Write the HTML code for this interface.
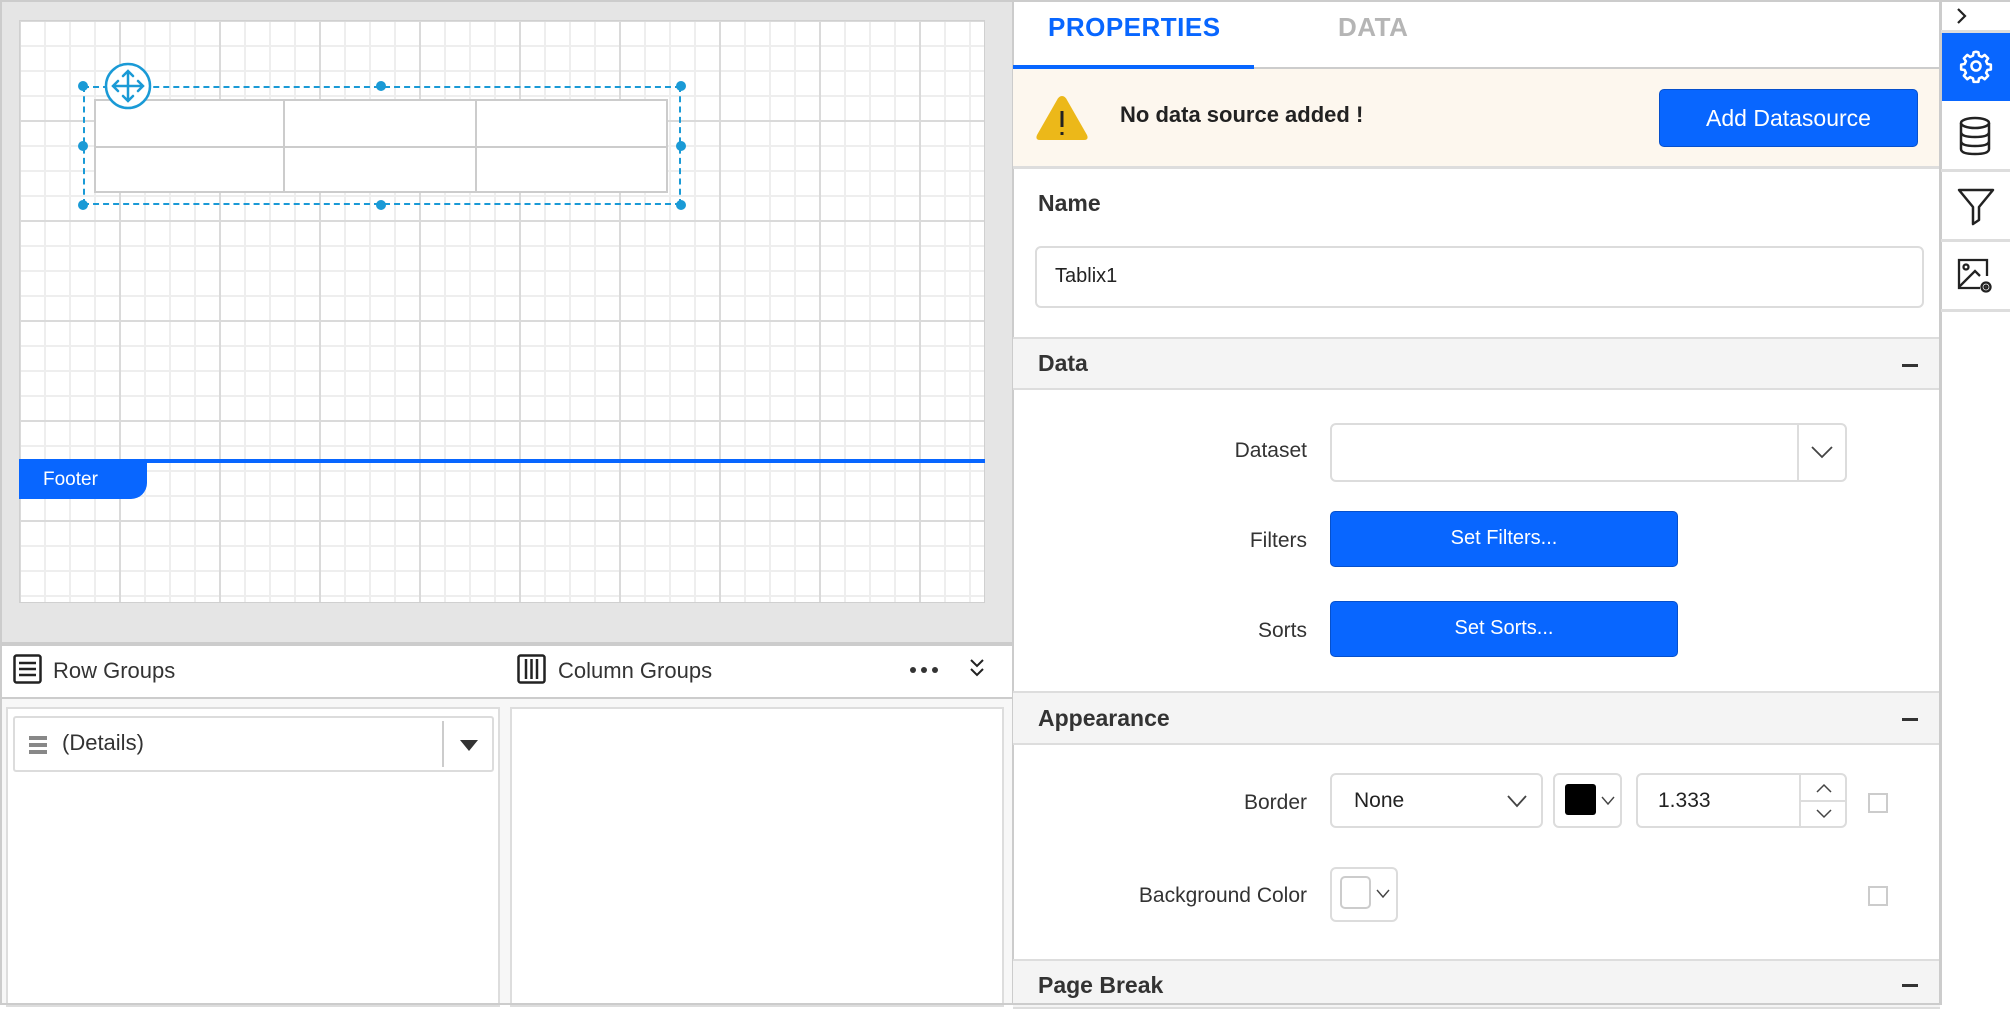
<!DOCTYPE html>
<html><head><meta charset="utf-8"><style>
*{box-sizing:border-box;margin:0;padding:0}
body{width:2010px;height:1005px;position:relative;overflow:hidden;background:#fff;font-family:"Liberation Sans",sans-serif;color:#222}
.a{position:absolute}
.grid{left:19px;top:20px;width:966px;height:583px;background-color:#fff;
background-image:linear-gradient(to right,#dadada 2px,transparent 2px),linear-gradient(to bottom,#dadada 2px,transparent 2px),linear-gradient(to right,#eeeeee 2px,transparent 2px),linear-gradient(to bottom,#eeeeee 2px,transparent 2px);
background-size:100px 100px,100px 100px,25px 25px,25px 25px;background-position:-1px -1px;border:1px solid #d0d0d0}
.dot{position:absolute;width:10px;height:10px;border-radius:50%;background:#1a9ad6}
.lbl{position:absolute;font-size:21px;color:#333;text-align:right;width:300px;left:1007px}
.btn{position:absolute;background:#0866ff;border:1px solid #0650cc;border-radius:5px;color:#fff;font-size:20px;text-align:center}
.box{position:absolute;border:2px solid #dcdcdc;border-radius:6px;background:#fff}
.sec{position:absolute;left:1013px;width:927px;background:#f4f4f4;border-top:2px solid #ddd;border-bottom:2px solid #ddd;font-size:23px;font-weight:bold;color:#333;padding-left:25px}
.sec .m{position:absolute;right:22px;top:50%;width:16px;height:3px;background:#333}
.cb{position:absolute;width:20px;height:20px;border:2px solid #ccc;left:1868px}
.sb{position:absolute;left:1941px;width:69px;border-bottom:3px solid #ddd}
</style></head><body>
<div class="a" style="left:0;top:0;width:1013px;height:642px;background:#e5e5e5;border-top:2px solid #ccc;border-left:2px solid #ccc"></div>
<div class="a grid"></div>
<div class="a" style="left:94px;top:99px;width:574px;height:94px;border:2px solid #ccc;background:#fff"></div>
<div class="a" style="left:94px;top:146px;width:574px;height:2px;background:#ccc"></div>
<div class="a" style="left:283px;top:99px;width:2px;height:94px;background:#ccc"></div>
<div class="a" style="left:475px;top:99px;width:2px;height:94px;background:#ccc"></div>
<div class="a" style="left:83px;top:86px;width:598px;height:119px;border:2px dashed #1a9ad6"></div>
<div class="dot" style="left:78px;top:81px"></div><div class="dot" style="left:376px;top:81px"></div><div class="dot" style="left:676px;top:81px"></div>
<div class="dot" style="left:78px;top:141px"></div><div class="dot" style="left:676px;top:141px"></div>
<div class="dot" style="left:78px;top:200px"></div><div class="dot" style="left:376px;top:200px"></div><div class="dot" style="left:676px;top:200px"></div>
<svg class="a" style="left:104px;top:62px" width="48" height="48" viewBox="0 0 48 48"><circle cx="24" cy="24" r="22" fill="#fff" stroke="#1a9ad6" stroke-width="2.5"/><g stroke="#1a9ad6" stroke-width="2.5" fill="none" stroke-linecap="round"><path d="M24 9V39M9 24H39M19 14l5-5 5 5M19 34l5 5 5-5M14 19l-5 5 5 5M34 19l5 5-5 5"/></g></svg>
<div class="a" style="left:19px;top:459px;width:966px;height:4px;background:#0866ff"></div>
<div class="a" style="left:19px;top:461px;width:128px;height:38px;background:#0866ff;border-bottom-right-radius:16px;color:#fff;font-size:19px;padding:8px 0 0 24px">Footer</div>
<div class="a" style="left:0;top:642px;width:1013px;height:4px;background:#ccc"></div>
<div class="a" style="left:0;top:646px;width:1013px;height:51px;background:#fff;border-left:2px solid #ccc"></div>
<svg class="a" style="left:13px;top:654px" width="29" height="30" viewBox="0 0 29 30"><rect x="1.5" y="1.5" width="26" height="27" rx="2" fill="none" stroke="#222" stroke-width="2.5"/><path d="M6 9H23M6 15H23M6 21H23" stroke="#222" stroke-width="2.5"/></svg>
<div class="a" style="left:53px;top:658px;font-size:22px;color:#333">Row Groups</div>
<svg class="a" style="left:517px;top:654px" width="29" height="30" viewBox="0 0 29 30"><rect x="1.5" y="1.5" width="26" height="27" rx="2" fill="none" stroke="#222" stroke-width="2.5"/><path d="M9 5V25M14.5 5V25M20 5V25" stroke="#222" stroke-width="2.5"/></svg>
<div class="a" style="left:558px;top:658px;font-size:22px;color:#333">Column Groups</div>
<svg class="a" style="left:909px;top:666px" width="32" height="8"><circle cx="4" cy="4" r="3" fill="#333"/><circle cx="15" cy="4" r="3" fill="#333"/><circle cx="26" cy="4" r="3" fill="#333"/></svg>
<svg class="a" style="left:969px;top:658px" width="16" height="20" viewBox="0 0 16 20"><path d="M2 2l6 6 6-6M2 11l6 6 6-6" fill="none" stroke="#222" stroke-width="2"/></svg>
<div class="a" style="left:0;top:697px;width:1013px;height:308px;background:#f7f7f7;border-top:2px solid #ccc;border-left:2px solid #ccc"></div>
<div class="a" style="left:6px;top:707px;width:494px;height:300px;background:#fff;border:2px solid #ddd"></div>
<div class="a" style="left:510px;top:707px;width:494px;height:300px;background:#fff;border:2px solid #ddd"></div>
<div class="box" style="left:13px;top:716px;width:481px;height:56px;border-radius:3px"></div>
<div class="a" style="left:29px;top:736px;width:18px;height:4px;background:#888;box-shadow:0 7px 0 #888,0 14px 0 #888"></div>
<div class="a" style="left:62px;top:730px;font-size:22px;color:#333">(Details)</div>
<div class="a" style="left:442px;top:721px;width:2px;height:46px;background:#ccc"></div>
<div class="a" style="left:460px;top:740px;width:0;height:0;border-left:9px solid transparent;border-right:9px solid transparent;border-top:11px solid #333"></div>
<div class="a" style="left:1012px;top:0;width:2px;height:1005px;background:#ccc"></div>
<div class="a" style="left:1048px;top:12px;font-size:26px;font-weight:bold;color:#0866ff;letter-spacing:.5px">PROPERTIES</div>
<div class="a" style="left:1338px;top:12px;font-size:26px;font-weight:bold;color:#b5b5b5;letter-spacing:.5px">DATA</div>
<div class="a" style="left:1013px;top:67px;width:927px;height:2px;background:#ccc"></div>
<div class="a" style="left:1013px;top:65px;width:241px;height:4px;background:#0866ff"></div>
<div class="a" style="left:1013px;top:69px;width:927px;height:100px;background:#fdf7ee;border-bottom:3px solid #ddd"></div>
<svg class="a" style="left:1034px;top:93px" width="56" height="50" viewBox="0 0 56 50"><path d="M28 3Q31 3 33 7L53 42Q55 47 50 47H6Q1 47 3 42L23 7Q25 3 28 3Z" fill="#ecb819"/><path d="M28 18V34M28 39V42" stroke="#222" stroke-width="3"/></svg>
<div class="a" style="left:1120px;top:102px;font-size:22px;font-weight:bold;color:#222">No data source added !</div>
<div class="btn" style="left:1659px;top:89px;width:259px;height:58px;line-height:56px;font-size:23px">Add Datasource</div>
<div class="a" style="left:1038px;top:190px;font-size:23px;font-weight:bold;color:#333">Name</div>
<div class="box" style="left:1035px;top:246px;width:889px;height:62px;font-size:20px;padding:17px 0 0 18px;color:#222">Tablix1</div>
<div class="sec" style="top:337px;height:53px;line-height:49px">Data<div class="m"></div></div>
<div class="lbl" style="top:439px">Dataset</div>
<div class="box" style="left:1330px;top:423px;width:517px;height:59px"></div>
<div class="a" style="left:1797px;top:425px;width:2px;height:55px;background:#ddd"></div>
<svg class="a" style="left:1810px;top:445px" width="24" height="14"><path d="M2 2l10 10 10-10" fill="none" stroke="#444" stroke-width="1.8"/></svg>
<div class="lbl" style="top:529px">Filters</div>
<div class="btn" style="left:1330px;top:511px;width:348px;height:56px;line-height:52px">Set Filters...</div>
<div class="lbl" style="top:619px">Sorts</div>
<div class="btn" style="left:1330px;top:601px;width:348px;height:56px;line-height:52px">Set Sorts...</div>
<div class="sec" style="top:691px;height:54px;line-height:50px">Appearance<div class="m"></div></div>
<div class="lbl" style="top:791px">Border</div>
<div class="box" style="left:1330px;top:773px;width:213px;height:55px;font-size:21px;padding:14px 0 0 22px">None</div>
<svg class="a" style="left:1506px;top:794px" width="22" height="14"><path d="M2 2l9 10 9-10" fill="none" stroke="#444" stroke-width="1.8"/></svg>
<div class="box" style="left:1553px;top:773px;width:69px;height:55px"></div>
<div class="a" style="left:1565px;top:784px;width:31px;height:31px;background:#000;border-radius:3px"></div>
<svg class="a" style="left:1601px;top:796px" width="14" height="10"><path d="M1 1l6 7 6-7" fill="none" stroke="#444" stroke-width="1.4"/></svg>
<div class="box" style="left:1636px;top:773px;width:211px;height:55px;font-size:21px;padding:14px 0 0 20px">1.333</div>
<div class="a" style="left:1799px;top:775px;width:2px;height:51px;background:#ddd"></div>
<div class="a" style="left:1801px;top:800px;width:44px;height:2px;background:#ddd"></div>
<svg class="a" style="left:1815px;top:782px" width="18" height="40"><path d="M2 10l7-7 7 7M2 28l7 7 7-7" fill="none" stroke="#444" stroke-width="1.5"/></svg>
<div class="cb" style="top:793px"></div>
<div class="lbl" style="top:884px">Background Color</div>
<div class="box" style="left:1330px;top:867px;width:68px;height:55px"></div>
<div class="a" style="left:1340px;top:876px;width:31px;height:33px;border:2px solid #ccc;border-radius:5px"></div>
<svg class="a" style="left:1376px;top:889px" width="14" height="10"><path d="M1 1l6 7 6-7" fill="none" stroke="#444" stroke-width="1.4"/></svg>
<div class="cb" style="top:886px"></div>
<div class="sec" style="top:959px;height:50px;line-height:48px">Page Break<div class="m"></div></div>
<div class="a" style="left:0;top:1003px;width:2010px;height:2px;background:#ccc"></div>
<div class="a" style="left:1939px;top:0;width:71px;height:1005px;background:#fff;border-left:3px solid #ccc"></div>
<div class="a" style="left:0;top:0;width:2010px;height:2px;background:#ccc"></div>
<svg class="a" style="left:1955px;top:6px" width="14" height="20"><path d="M3 3l7 7-7 7" fill="none" stroke="#222" stroke-width="2.2"/></svg>
<div class="sb" style="top:0;height:33px"></div>
<div class="a" style="left:1942px;top:33px;width:68px;height:68px;background:#0866ff"></div>
<svg class="a" style="left:1958px;top:48px" width="36" height="36" viewBox="0 0 24 24"><path d="M12 2.5l1.6.3.4 2.3 1.9.9 1.9-1.4 2.3 2.3-1.4 1.9.9 1.9 2.3.4v3.2l-2.3.4-.9 1.9 1.4 1.9-2.3 2.3-1.9-1.4-1.9.9-.4 2.3h-3.2l-.4-2.3-1.9-.9-1.9 1.4-2.3-2.3 1.4-1.9-.9-1.9-2.3-.4v-3.2l2.3-.4.9-1.9-1.4-1.9 2.3-2.3 1.9 1.4 1.9-.9.4-2.3z" fill="none" stroke="#fff" stroke-width="1.7" stroke-linejoin="round"/><circle cx="12" cy="12" r="3" fill="none" stroke="#fff" stroke-width="1.7"/></svg>
<div class="sb" style="top:101px;height:71px"></div>
<svg class="a" style="left:1958px;top:116px" width="34" height="40" viewBox="0 0 34 40"><g fill="none" stroke="#222" stroke-width="2.5"><ellipse cx="17" cy="7" rx="14" ry="5"/><path d="M3 7V33Q3 38 17 38Q31 38 31 33V7M3 16Q3 21 17 21Q31 21 31 16M3 25Q3 30 17 30Q31 30 31 25"/></g></svg>
<div class="sb" style="top:172px;height:70px"></div>
<svg class="a" style="left:1957px;top:187px" width="38" height="40" viewBox="0 0 38 40"><path d="M2 3H36L22 20V33L16 37V20Z" fill="none" stroke="#222" stroke-width="2.5" stroke-linejoin="round"/></svg>
<div class="sb" style="top:242px;height:70px"></div>
<svg class="a" style="left:1956px;top:257px" width="40" height="40" viewBox="0 0 40 40"><g fill="none" stroke="#222" stroke-width="2.3"><path d="M24 31H3V3H31V19"/><circle cx="10" cy="10" r="2.5"/><path d="M3 30L19 14L24 19"/><circle cx="30" cy="30" r="4.5"/><circle cx="30" cy="30" r="1.5"/></g></svg>
</body></html>
